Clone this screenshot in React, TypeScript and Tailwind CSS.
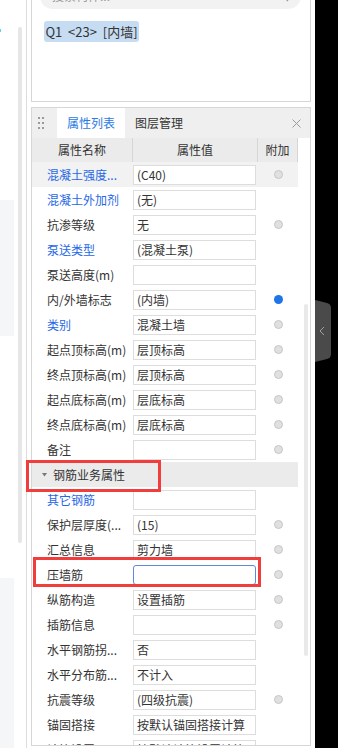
import React from "react";

type Row = {
  label: string;
  value?: string;
  blue?: boolean;
  dot?: "gray" | "blue";
  active?: boolean;
  focus?: boolean;
  group?: boolean;
};

const rows: Row[] = [
  { label: "混凝土强度...", value: "(C40)", blue: true, dot: "gray", active: true },
  { label: "混凝土外加剂", value: "(无)", blue: true },
  { label: "抗渗等级", value: "无", dot: "gray" },
  { label: "泵送类型", value: "(混凝土泵)", blue: true },
  { label: "泵送高度(m)", value: "" },
  { label: "内/外墙标志", value: "(内墙)", dot: "blue" },
  { label: "类别", value: "混凝土墙", blue: true, dot: "gray" },
  { label: "起点顶标高(m)", value: "层顶标高", dot: "gray" },
  { label: "终点顶标高(m)", value: "层顶标高", dot: "gray" },
  { label: "起点底标高(m)", value: "层底标高", dot: "gray" },
  { label: "终点底标高(m)", value: "层底标高", dot: "gray" },
  { label: "备注", value: "", dot: "gray" },
  { label: "钢筋业务属性", group: true },
  { label: "其它钢筋", value: "", blue: true },
  { label: "保护层厚度(...", value: "(15)", dot: "gray" },
  { label: "汇总信息", value: "剪力墙", dot: "gray" },
  { label: "压墙筋", value: "", dot: "gray", focus: true },
  { label: "纵筋构造", value: "设置插筋", dot: "gray" },
  { label: "插筋信息", value: "", dot: "gray" },
  { label: "水平钢筋拐...", value: "否" },
  { label: "水平分布筋...", value: "不计入" },
  { label: "抗震等级", value: "(四级抗震)", dot: "gray" },
  { label: "锚固搭接", value: "按默认锚固搭接计算" },
  { label: "计算设置", value: "按默认计算设置计算" },
];

function Dot({ kind }: { kind?: "gray" | "blue" }) {
  if (!kind) return null;
  if (kind === "blue") {
    return <span className="block h-[9px] w-[9px] rounded-full bg-[#1f74e8]" />;
  }
  return <span className="block h-[9px] w-[9px] rounded-full border border-[#c6c6c6] bg-[#e0e0e0]" />;
}

function PropRow({ row }: { row: Row }) {
  if (row.group) {
    return (
      <div className="flex h-[25px] items-center bg-[#ebebeb] pl-[10px] text-[12px] text-[#333]">
        <svg width="5" height="4" viewBox="0 0 5 4" className="mr-[6px]">
          <path d="M0 0 L5 0 L2.5 3.5 Z" fill="#777" />
        </svg>
        {row.label}
      </div>
    );
  }
  return (
    <div className={`flex h-[25px] items-center ${row.active ? "bg-[#f2f2f2]" : ""}`}>
      <div
        className={`w-[101px] shrink-0 overflow-hidden whitespace-nowrap pl-[15px] text-[12px] ${
          row.blue ? "text-[#2667e6]" : "text-[#333]"
        }`}
      >
        {row.label}
      </div>
      <div className="w-[125px] shrink-0">
        <div
          className={`flex h-[20px] w-[123px] items-center overflow-hidden whitespace-nowrap border bg-white px-[3px] text-[12px] text-[#333] ${
            row.focus ? "rounded-[3px] border-[#5d88dc]" : "border-[#dddddd]"
          }`}
        >
          {row.value}
        </div>
      </div>
      <div className="flex w-[40px] shrink-0 justify-center">
        <Dot kind={row.dot} />
      </div>
    </div>
  );
}

export default function App() {
  return (
    <div className="relative flex h-[748px] w-[338px] overflow-hidden bg-white font-['Noto_Sans_CJK_SC',sans-serif]">
      {/* left strip */}
      <div className="flex w-[27px] shrink-0 border-r border-[#dcdcdc]">
        <div className="flex w-[14px] flex-col">
          <div className="mt-[29px] h-[3px] w-[1px] bg-[#5fd3e8]" />
          <div className="mt-[168px] h-[136px] bg-[#f5f6f8]" />
          <div className="mt-[242px] flex-1 bg-[#f5f6f8]" />
        </div>
        <div className="ml-[4px] mt-[27px] h-[516px] w-[4px] rounded-full bg-[#e6e6e6]" />
      </div>

      {/* main column */}
      <div className="flex w-[288px] shrink-0 flex-col pl-[4px] pr-[4px]">
        <div className="flex h-[102px] flex-col border-x border-b border-[#d6d6d6]">
          <div className="-mt-[17px] ml-[8px] mr-[9px] flex h-[26px] items-center justify-between rounded-full bg-[#f2f2f2] px-[12px] text-[12px] text-[#999]">
            <span>搜索构件...</span>
            <svg width="12" height="12" viewBox="0 0 12 12" fill="none" stroke="#999" strokeWidth="1.3">
              <circle cx="5" cy="5" r="4" />
              <path d="M8 8 L11 11" />
            </svg>
          </div>
          <div className="ml-[12px] mt-[12px] flex h-[21px] w-[95px] items-center justify-center whitespace-pre rounded-[3px] bg-[#c6dcf2] text-[13px] text-[#333]">
            {"Q1  <23>  [内墙]"}
          </div>
        </div>

        <div className="mt-[5px] flex h-[639px] flex-col overflow-hidden border border-[#d6d6d6]">
          {/* tabs */}
          <div className="flex h-[30px] shrink-0 items-center bg-[#efefef] text-[12px]">
            <div className="ml-[6px] grid grid-cols-2 gap-x-[2px] gap-y-[3px]">
              {[0, 1, 2, 3, 4, 5].map((i) => (
                <span key={i} className="block h-[2px] w-[2px] bg-[#9a9a9a]" />
              ))}
            </div>
            <div className="ml-[13px] flex h-full w-[68px] items-center justify-center bg-white text-[#2a7ae2]">
              属性列表
            </div>
            <div className="ml-[10px] text-[#333]">图层管理</div>
            <svg width="9" height="9" viewBox="0 0 9 9" className="ml-auto mr-[9px]" stroke="#9a9a9a" strokeWidth="1">
              <path d="M0.5 0.5 L8.5 8.5 M8.5 0.5 L0.5 8.5" />
            </svg>
          </div>

          <div className="flex flex-1">
            <div className="w-[266px] shrink-0">
              <div className="flex h-[24px] items-center bg-[#ebebeb] text-[12px] text-[#333]">
                <div className="flex h-full w-[101px] items-center justify-center border-r border-[#d6d6d6]">属性名称</div>
                <div className="flex h-full w-[125px] items-center justify-center border-r border-[#d6d6d6]">属性值</div>
                <div className="flex h-full w-[40px] items-center justify-center border-r border-[#d6d6d6]">附加</div>
              </div>
              {rows.map((r) => (
                <PropRow key={r.label} row={r} />
              ))}
            </div>
            <div className="flex flex-1 justify-center">
              <div className="ml-[3px] mt-[166px] h-[352px] w-[4px] rounded-full bg-[#e9e9e9]" />
            </div>
          </div>
        </div>
      </div>

      {/* dark side */}
      <div className="flex flex-1 flex-col bg-black">
        <svg width="16" height="62" viewBox="0 0 16 62" className="mt-[300px]">
          <path d="M0 0 L12 3 Q16 4 16 8 L16 54 Q16 58 12 59 L0 62 Z" fill="#4a4a4a" />
          <path d="M9 27 L5 31 L9 35" fill="none" stroke="#a0a0a0" strokeWidth="1" />
        </svg>
      </div>

      {/* annotation boxes */}
      <div className="pointer-events-none absolute left-[26px] top-[460px] h-[32px] w-[135px] border-[3px] border-[#f23d3d]" />
      <div className="pointer-events-none absolute left-[33px] top-[557px] h-[30px] w-[228px] border-[3px] border-[#f23d3d]" />
    </div>
  );
}
